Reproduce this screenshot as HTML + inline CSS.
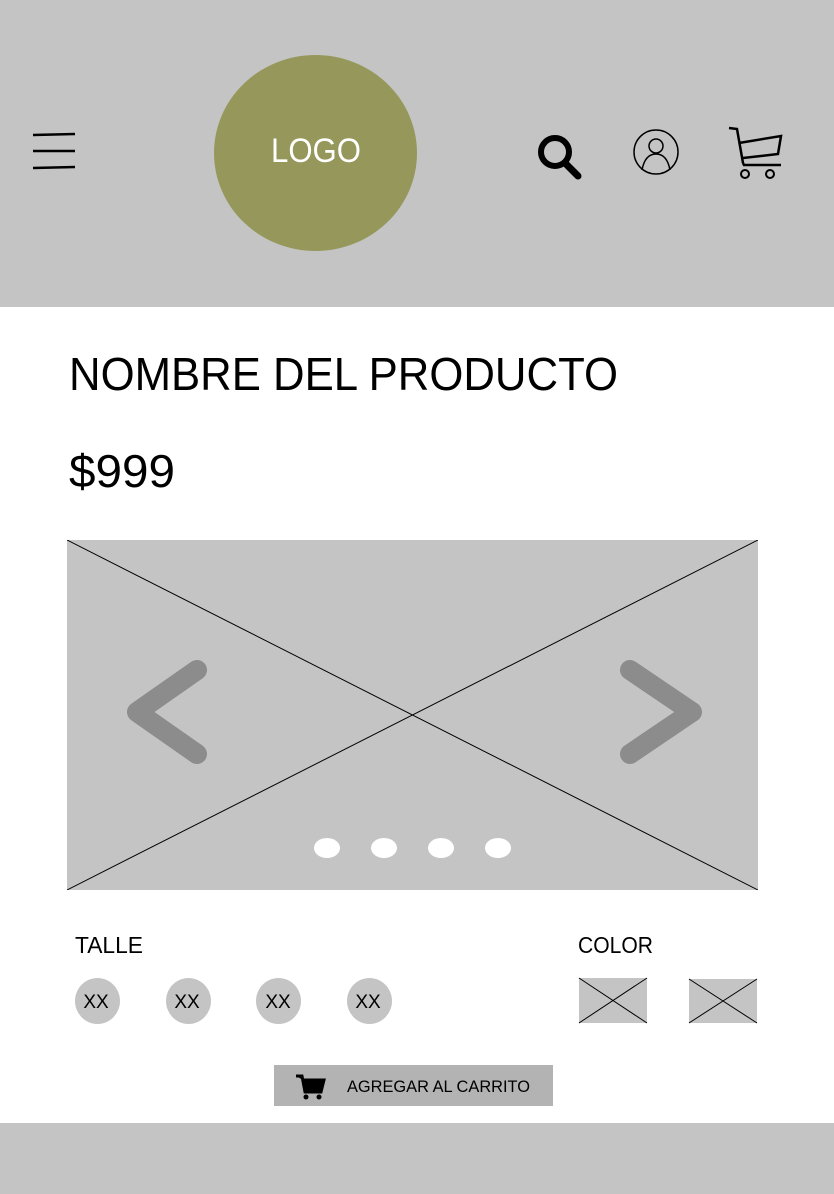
<!DOCTYPE html>
<html><head><meta charset="utf-8"><style>
*{margin:0;padding:0;box-sizing:border-box}
body{width:834px;height:1194px;background:#fff;font-family:"Liberation Sans",sans-serif;position:relative;overflow:hidden}
.a{position:absolute}
</style></head><body>
<div class="a" style="left:0;top:0;width:834px;height:307px;background:#c4c4c4"></div>
<svg class="a" style="left:0;top:0" width="834" height="307">
<g stroke="#000" stroke-width="2.5" fill="none">
<line x1="33" y1="135" x2="75" y2="134"/><line x1="33" y1="151" x2="75" y2="151"/><line x1="33" y1="168" x2="75" y2="167"/>
</g>
<ellipse cx="315.5" cy="153" rx="101.5" ry="98" fill="#96985b"/>
<text x="316" y="162" font-size="34" fill="#fff" text-anchor="middle" font-family="Liberation Sans" textLength="90" lengthAdjust="spacingAndGlyphs">LOGO</text>
<circle cx="555" cy="152" r="14" stroke="#000" stroke-width="6" fill="none"/>
<line x1="565" y1="163" x2="578" y2="176" stroke="#000" stroke-width="7" stroke-linecap="round"/>
<ellipse cx="656" cy="152" rx="22" ry="22" stroke="#000" stroke-width="1.5" fill="none"/>
<circle cx="656" cy="146" r="7" stroke="#000" stroke-width="1.5" fill="none"/>
<path d="M642 170 Q645 154 656 154 Q667 154 670 170" stroke="#000" stroke-width="1.5" fill="none"/>
<path d="M729 128 L737 129 L743 163 M739 143 L781 136 L778 154 L743 158 M743 163 L744 165 L781 165" stroke="#000" stroke-width="2.5" fill="none"/>
<circle cx="745" cy="174" r="4" stroke="#000" stroke-width="2" fill="none"/>
<circle cx="770" cy="174" r="4" stroke="#000" stroke-width="2" fill="none"/>
</svg>
<svg class="a" style="left:0;top:330px" width="834" height="180">
<text x="69" y="60" font-size="46" font-family="Liberation Sans" textLength="549" lengthAdjust="spacingAndGlyphs">NOMBRE DEL PRODUCTO</text>
<text x="69" y="157" font-size="46" font-family="Liberation Sans" textLength="106" lengthAdjust="spacingAndGlyphs">$999</text>
</svg>
<svg class="a" style="left:67px;top:540px" width="691" height="350">
<rect width="691" height="350" fill="#c4c4c4"/>
<line x1="0" y1="0" x2="691" y2="350" stroke="#000" stroke-width="1"/>
<line x1="691" y1="0" x2="0" y2="350" stroke="#000" stroke-width="1"/>
<polyline points="130,130 70,172 130,214" stroke="#8c8c8c" stroke-width="20" fill="none" stroke-linejoin="round" stroke-linecap="round"/>
<polyline points="563,130 625,172 563,214" stroke="#8c8c8c" stroke-width="20" fill="none" stroke-linejoin="round" stroke-linecap="round"/>
<ellipse cx="260" cy="308" rx="13" ry="10" fill="#fff"/><ellipse cx="317" cy="308" rx="13" ry="10" fill="#fff"/>
<ellipse cx="374" cy="308" rx="13" ry="10" fill="#fff"/><ellipse cx="431" cy="308" rx="13" ry="10" fill="#fff"/>
</svg>
<svg class="a" style="left:0;top:920px" width="834" height="200">
<text x="75" y="33" font-size="23" font-family="Liberation Sans" textLength="68" lengthAdjust="spacingAndGlyphs">TALLE</text>
<text x="578" y="33" font-size="23" font-family="Liberation Sans" textLength="75" lengthAdjust="spacingAndGlyphs">COLOR</text>
</svg>
<svg class="a" style="left:0;top:970px" width="834" height="140">
<g fill="#c4c4c4"><ellipse cx="97.5" cy="31" rx="22.5" ry="23"/><ellipse cx="188.5" cy="31" rx="22.5" ry="23"/><ellipse cx="278.5" cy="31" rx="22.5" ry="23"/><ellipse cx="369.5" cy="31" rx="22.5" ry="23"/></g>
<g font-size="19" text-anchor="middle" font-family="Liberation Sans"><text x="96" y="38">XX</text><text x="187" y="38">XX</text><text x="278" y="38">XX</text><text x="368" y="38">XX</text></g>
<rect x="579" y="8" width="68" height="45" fill="#c4c4c4"/><path d="M579 8 L647 53 M647 8 L579 53" stroke="#000"/>
<rect x="689" y="9" width="68" height="44" fill="#c4c4c4"/><path d="M689 53 L757 9 M689 9 L757 53" stroke="#000"/>
<rect x="274" y="95" width="279" height="41" fill="#b3b3b3"/>
<path d="M296 106 L302 106 L305 122 L321 122 L324 110 L303 110" stroke="#000" stroke-width="3" fill="#000"/>
<circle cx="306" cy="127" r="2.5"/><circle cx="319" cy="127" r="2.5"/>
<text x="347" y="122" font-size="17" font-family="Liberation Sans" textLength="183" lengthAdjust="spacingAndGlyphs">AGREGAR AL CARRITO</text>
</svg>
<div class="a" style="left:0;top:1123px;width:834px;height:71px;background:#c4c4c4"></div>
</body></html>
